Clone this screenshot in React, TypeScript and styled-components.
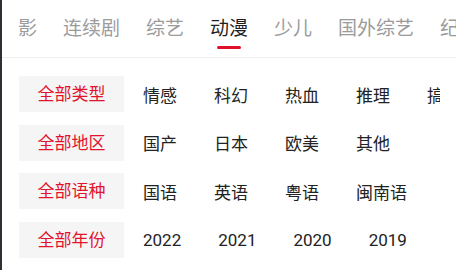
import React from 'react';
import styled, { createGlobalStyle } from 'styled-components';

const GlobalStyle = createGlobalStyle`
  html, body {
    margin: 0;
    padding: 0;
    background: #fff;
  }
  body {
    font-family: Roboto, "Noto Sans CJK SC", sans-serif;
  }
`;

const Page = styled.div`
  height: 270px;
  border-left: 2px solid #2e3036;
  overflow: hidden;
`;

const TabBar = styled.div`
  display: flex;
  gap: 26px;
  height: 57px;
  padding-left: 16px;
  border-bottom: 1px solid #efefef;
  white-space: nowrap;
  overflow: hidden;
`;

const Tab = styled.div<{ $active?: boolean }>`
  position: relative;
  flex-shrink: 0;
  font-size: 19px;
  line-height: 57px;
  height: 57px;
  color: ${({ $active }) => ($active ? '#1f1f1f' : '#9b9b9b')};

  &::after {
    content: '';
    display: ${({ $active }) => ($active ? 'block' : 'none')};
    position: absolute;
    left: 50%;
    bottom: 8px;
    width: 24px;
    height: 3px;
    margin-left: -12px;
    border-radius: 2px;
    background: #e0102a;
  }
`;

const Filters = styled.div`
  display: flex;
  flex-direction: column;
  gap: 12.7px;
  padding: 18px 16px 0 17px;
`;

const Row = styled.div`
  display: flex;
  align-items: center;
  height: 36px;
  white-space: nowrap;
  overflow: hidden;
`;

const Label = styled.div`
  flex-shrink: 0;
  width: 105px;
  height: 36px;
  line-height: 36px;
  margin-right: 19px;
  text-align: center;
  font-size: 17px;
  color: #e3132d;
  background: #f5f5f5;
`;

const Item = styled.div`
  flex-shrink: 0;
  margin-right: 37px;
  font-size: 17px;
  color: #222;
`;

const tabs = ['影', '连续剧', '综艺', '动漫', '少儿', '国外综艺', '纪录片'];

const rows = [
  { label: '全部类型', items: ['情感', '科幻', '热血', '推理', '搞笑'] },
  { label: '全部地区', items: ['国产', '日本', '欧美', '其他'] },
  { label: '全部语种', items: ['国语', '英语', '粤语', '闽南语'] },
  { label: '全部年份', items: ['2022', '2021', '2020', '2019', '2018'] },
];

export default function App() {
  return (
    <>
      <GlobalStyle />
      <Page>
        <TabBar>
          {tabs.map((t) => (
            <Tab key={t} $active={t === '动漫'}>
              {t}
            </Tab>
          ))}
        </TabBar>
        <Filters>
          {rows.map(({ label, items }) => (
            <Row key={label}>
              <Label>{label}</Label>
              {items.map((i) => (
                <Item key={i}>{i}</Item>
              ))}
            </Row>
          ))}
        </Filters>
      </Page>
    </>
  );
}
